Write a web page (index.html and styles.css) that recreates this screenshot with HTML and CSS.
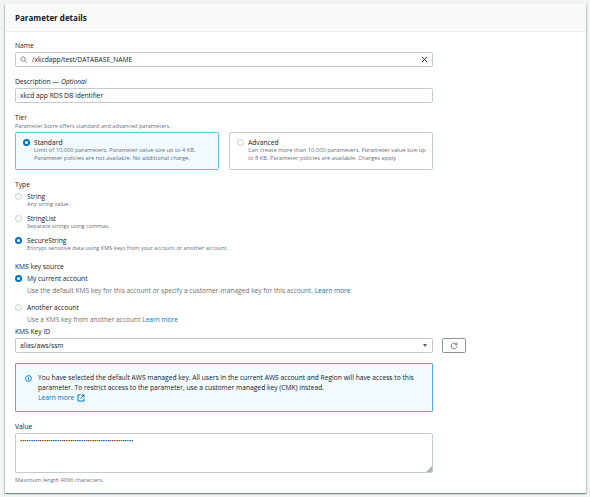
FILE: index.html
```html
<!DOCTYPE html>
<html lang="en">
<head>
<meta charset="utf-8">
<title>Parameter details</title>
<link rel="stylesheet" href="styles.css">
</head>
<body>
<main class="card">
  <header class="card-head"><h2>Parameter details</h2></header>
  <div class="card-body">
    <div class="field f-name">
      <div class="label">Name</div>
      <div class="input">
        <svg class="ic-search" viewBox="0 0 16 16"><circle cx="7" cy="7" r="5" fill="none" stroke="#545b64" stroke-width="1.6"/><path d="M10.6 10.6 15 15" stroke="#545b64" stroke-width="1.6"/></svg>
        <span class="grow">/xkcdapp/test/DATABASE_NAME</span>
        <svg class="ic-x" viewBox="0 0 16 16"><path d="M2 2 14 14M14 2 2 14" stroke="#16191f" stroke-width="2"/></svg>
      </div>
    </div>
    <div class="field f-desc">
      <div class="label">Description — <i>Optional</i></div>
      <div class="input"><span class="grow">xkcd app RDS DB identifier</span></div>
    </div>
    <div class="f-tier">
      <div class="label">Tier</div>
      <div class="hint">Parameter Store offers standard and advanced parameters.</div>
      <div class="tiles">
        <div class="tile on">
          <span class="radio on"></span>
          <div><div class="opt">Standard</div><div class="hint2">Limit of 10,000 parameters. Parameter value size up to 4 KB. Parameter policies are not available. No additional charge.</div></div>
        </div>
        <div class="tile">
          <span class="radio"></span>
          <div><div class="opt">Advanced</div><div class="hint2">Can create more than 10,000 parameters. Parameter value size up to 8 KB. Parameter policies are available. Charges apply</div></div>
        </div>
      </div>
    </div>
    <div class="f-type">
      <div class="label">Type</div>
      <div class="row r-first"><span class="radio"></span><div><div class="opt">String</div><div class="hint">Any string value.</div></div></div>
      <div class="row"><span class="radio"></span><div><div class="opt">StringList</div><div class="hint">Separate strings using commas.</div></div></div>
      <div class="row"><span class="radio on"></span><div><div class="opt">SecureString</div><div class="hint">Encrypt sensitive data using KMS keys from your account or another account.</div></div></div>
    </div>
    <div class="f-kms">
      <div class="label">KMS key source</div>
      <div class="row k-first"><span class="radio on"></span><div><div class="opt">My current account</div><div class="kdesc">Use the default KMS key for this account or specify a customer-managed key for this account. <a href="#">Learn more</a></div></div></div>
      <div class="row k-next"><span class="radio"></span><div><div class="opt">Another account</div><div class="kdesc">Use a KMS key from another account <a href="#">Learn more</a></div></div></div>
    </div>
    <div class="f-keyid">
      <div class="label">KMS Key ID</div>
      <div class="keyrow">
        <div class="input sel"><span class="grow">alias/aws/ssm</span><span class="caret"></span></div>
        <button class="refresh" type="button" aria-label="Refresh"><svg viewBox="0 0 16 16"><path d="M13.6 8.5A5.7 5.7 0 1 1 11.8 3.8" fill="none" stroke="#545b64" stroke-width="1.6"/><path d="M13.8 1.2V5.6H9.4" fill="none" stroke="#545b64" stroke-width="1.6"/></svg></button>
      </div>
    </div>
    <div class="alert">
      <svg class="ic-info" viewBox="0 0 16 16"><circle cx="8" cy="8" r="6.6" fill="none" stroke="#0073bb" stroke-width="2"/><path d="M8 7v5M8 4v1.8" stroke="#0073bb" stroke-width="2"/></svg>
      <div class="alert-text">You have selected the default AWS managed key. All users in the current AWS account and Region will have access to this parameter. To restrict access to the parameter, use a customer managed key (CMK) instead.<br><a href="#">Learn more <svg class="ic-ext" viewBox="0 0 16 16"><path d="M7 2H2v12h12V9" fill="none" stroke="#0073bb" stroke-width="2"/><path d="M9 2h5v5M14 2 7 9" fill="none" stroke="#0073bb" stroke-width="2"/></svg></a></div>
    </div>
    <div class="f-value">
      <div class="label">Value</div>
      <div class="textarea"><span class="dots">••••••••••••••••••••••••••••••••••••••••••••••••••••</span>
        <svg class="grip" viewBox="0 0 6 6"><path d="M6 0V6H0Z" fill="#aab7b8"/></svg>
      </div>
      <div class="hint max">Maximum length 4096 characters.</div>
    </div>
  </div>
</main>
</body>
</html>
```
FILE: styles.css
```css
* { box-sizing: border-box; }
html, body { margin: 0; padding: 0; }
body {
  width: 590px; height: 497px; overflow: hidden;
  background: #f2f3f3;
  font-family: "Open Sans", "Noto Sans", sans-serif;
  font-size: 6.7px; line-height: 10px; color: #16191f;
  padding: 4px 4px 0 5px;
}
.card {
  background: #fff; height: 489px;
  box-shadow: 0 1px 1px rgba(0,28,36,.3), 1px 1px 1px rgba(0,28,36,.15), -1px 1px 1px rgba(0,28,36,.15);
}
.card-head { height: 28px; background: #fafafa; border-bottom: 1px solid #eaeded; padding: 0 10px; display: flex; align-items: center; }
h2 { margin: 0; font-size: 8px; font-weight: 700; color: #16191f; }
.card-body { padding: 9px 0 0 10px; width: 428px; }
.label { font-size: 6.7px; line-height: 10px; color: #16191f; }
.input { height: 15px; display: flex; align-items: center; background: #fff; border: 1px solid #c3cccd; border-radius: 1.5px; padding: 0 4px; margin-top: 1px; font-size: 6.7px; }
.grow { flex: 1; }
.ic-search { width: 7px; height: 7px; margin: 0 5px 0 0; flex: none; }
.ic-x { width: 7px; height: 7px; flex: none; }
.f-desc { margin-top: 10px; }
.f-tier { margin-top: 10px; }
.hint { font-size: 5.6px; line-height: 7px; color: #687078; }
.tiles { display: flex; gap: 10px; margin-top: 2px; }
.tile { flex: 1; height: 38px; border: 1px solid #c3cccd; border-radius: 1.5px; padding: 5px 5px 5px 7px; display: flex; gap: 4px; }
.tile.on { background: #f1faff; border-color: #5fc4e0; }
.opt { font-size: 6.7px; line-height: 9px; color: #16191f; }
.hint2 { font-size: 5.75px; line-height: 7.7px; color: #687078; }
.radio { flex: none; width: 7px; height: 7px; border-radius: 50%; border: 1px solid #c3cccd; background: #fff; margin-top: 1px; }
.radio.on { border: 2.5px solid #0073bb; }
.f-type { margin-top: 10px; }
.row { display: flex; gap: 5px; margin-top: 6px; }
.row.r-first { margin-top: 2px; }
.f-kms { margin-top: 10px; }
.row.k-first { margin-top: 2px; }
.row.k-next { margin-top: 7px; }
.kdesc { font-size: 6.6px; line-height: 10px; color: #687078; margin-top: 3px; white-space: nowrap; }
a { color: #0073bb; text-decoration: none; }
.f-keyid { margin-top: 2px; }
.keyrow { display: flex; width: 452px; gap: 9px; align-items: flex-start; }
.sel { width: 418px; flex: none; }
.caret { width: 0; height: 0; border-left: 2.5px solid transparent; border-right: 2.5px solid transparent; border-top: 3.5px solid #545b64; margin-right: 1px; }
.refresh { flex: none; width: 24px; height: 15px; margin-top: 1px; padding: 0; border: 1px solid #879596; border-radius: 1.5px; background: #fff; display: flex; align-items: center; justify-content: center; }
.refresh svg { width: 8px; height: 8px; }
.alert { margin-top: 10px; height: 49px; background: #f1faff; border: 1px solid #5aa6d6; border-radius: 1px; padding: 9px 9px 0 9px; display: flex; gap: 6px; }
.ic-info { flex: none; width: 7px; height: 7px; margin-top: 1.5px; }
.alert-text { font-size: 6.7px; line-height: 10px; color: #16191f; }
.ic-ext { width: 8px; height: 8px; vertical-align: -1.5px; margin-left: 1px; }
.f-value { margin-top: 10px; }
.textarea { position: relative; height: 40px; border: 1px solid #c3cccd; border-radius: 1.5px; margin-top: 1px; padding: 3px 4px; font-size: 5.8px; line-height: 8px; color: #16191f; background: #fff; }
.grip { position: absolute; right: 0; bottom: 0; width: 6px; height: 6px; }
.max { margin-top: 4px; }
```
